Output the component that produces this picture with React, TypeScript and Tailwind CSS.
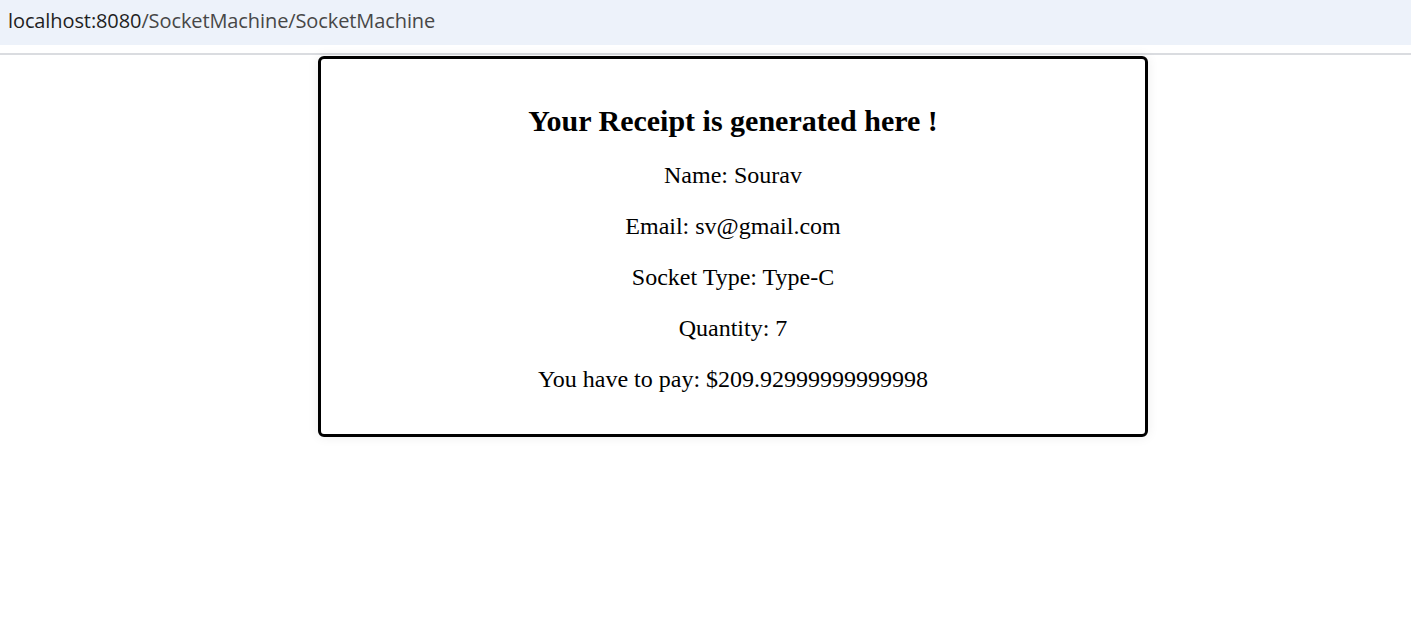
import React from "react";

export default function App() {
  const rows = [
    "Name: Sourav",
    "Email: sv@gmail.com",
    "Socket Type: Type-C",
    "Quantity: 7",
    "You have to pay: $209.92999999999998",
  ];
  return (
    <div className="w-[1411px] h-[642px] bg-white overflow-hidden">
      <div className="h-[45px] bg-[#edf2fa] flex items-center pl-[8px] pb-[4px]">
        <span className="text-[20px] tracking-[-0.1px] font-['Open_Sans',sans-serif]">
          <span className="text-[#1f1f1f]">localhost:8080</span>
          <span className="text-[#474747]">/SocketMachine/SocketMachine</span>
        </span>
      </div>
      <div className="h-[8px] bg-white" />
      <div className="h-[2px] bg-[#dadce0]" />
      <div className="pl-[318px] pt-[1px]">
        <div className="w-[830px] border-[3px] border-black rounded-[6px] shadow-[0_0_12px_rgba(0,0,0,0.08)] pt-[45px] pb-[41px] flex flex-col items-center gap-[23px] font-['Liberation_Serif',serif] text-black">
          <h2 className="text-[30px] leading-[34px] font-bold">Your Receipt is generated here !</h2>
          {rows.map((r) => (
            <p key={r} className="text-[24px] leading-[28px]">
              {r}
            </p>
          ))}
        </div>
      </div>
    </div>
  );
}
